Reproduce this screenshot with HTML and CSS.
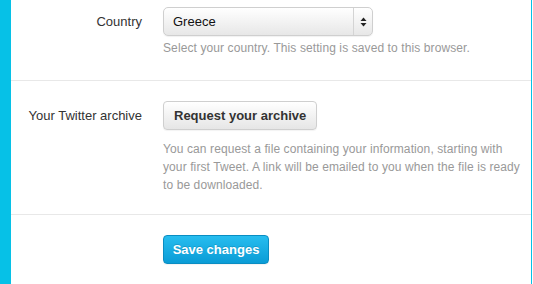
FILE: index.html
```html
<!DOCTYPE html>
<html>
<head>
<meta charset="utf-8">
<link rel="stylesheet" href="styles.css">
</head>
<body>
<div class="page">
  <div class="row row-first">
    <div class="label">Country</div>
    <div class="control">
      <div class="select">
        <span class="select-value">Greece</span>
        <span class="select-arrows">
          <svg width="7" height="10" viewBox="0 0 7 10"><path d="M3.5 0.5 L6.5 4 L0.5 4 Z" fill="#222"/><path d="M0.5 6 L6.5 6 L3.5 9.5 Z" fill="#222"/></svg>
        </span>
      </div>
      <p class="help help-tight">Select your country. This setting is saved to this browser.</p>
    </div>
  </div>
  <div class="row">
    <div class="label">Your Twitter archive</div>
    <div class="control">
      <button class="btn">Request your archive</button>
      <p class="help">You can request a file containing your information, starting with your first Tweet. A link will be emailed to you when the file is ready to be downloaded.</p>
    </div>
  </div>
  <div class="row row-last">
    <div class="label"></div>
    <div class="control">
      <button class="btn btn-primary">Save changes</button>
    </div>
  </div>
</div>
</body>
</html>
```
FILE: styles.css
```css
html, body {
  margin: 0;
  padding: 0;
  background: #fff;
}
body {
  font-family: "Liberation Sans", Arial, Helvetica, sans-serif;
  font-size: 13px;
  color: #333;
}
.page {
  width: 520px;
  height: 284px;
  border-left: 11px solid #06c1e7;
  border-right: 1px solid #06c1e7;
  overflow: hidden;
}
.row {
  display: grid;
  grid-template-columns: 131px 1fr;
  column-gap: 21px;
  padding: 20px 0 20px;
  border-bottom: 1px solid #e8e8e8;
}
.row-first {
  padding-top: 7px;
  padding-bottom: 23px;
}
.row-last {
  border-bottom: none;
}
.label {
  text-align: right;
  line-height: 18px;
  padding-top: 6px;
  color: #333;
}
.control {
  min-width: 0;
}
.select {
  box-sizing: border-box;
  width: 210px;
  height: 29px;
  display: flex;
  align-items: center;
  border: 1px solid #cfcfcf;
  border-radius: 5px;
  background: linear-gradient(#ffffff, #e7e7e7);
  box-shadow: 0 1px 1px rgba(0,0,0,0.06);
}
.select-value {
  flex: 1;
  padding-left: 9px;
  color: #111;
}
.select-arrows {
  width: 18px;
  height: 100%;
  border-left: 1px solid #d4d4d4;
  display: flex;
  align-items: center;
  justify-content: center;
}
.select-arrows svg {
  display: block;
}
.help {
  margin: 10px 0 0;
  font-size: 12px;
  line-height: 18px;
  color: #999;
  padding-right: 3px;
  letter-spacing: 0.1px;
}
.help-tight {
  margin-top: 3px;
}
.btn {
  box-sizing: border-box;
  height: 29px;
  padding: 0 10px;
  font-family: "Liberation Sans", Arial, Helvetica, sans-serif;
  font-size: 13px;
  font-weight: bold;
  color: #333;
  border: 1px solid #cfcfcf;
  border-radius: 4px;
  background: linear-gradient(#ffffff, #e6e6e6);
  box-shadow: 0 1px 1px rgba(0,0,0,0.05);
  display: block;
}
.btn-primary {
  width: 106px;
  padding: 0;
  color: #fff;
  border-color: #0a8dc2;
  background: linear-gradient(#27bdef, #0a9cd6);
  text-shadow: 0 -1px 0 rgba(0,0,0,0.15);
}
```
